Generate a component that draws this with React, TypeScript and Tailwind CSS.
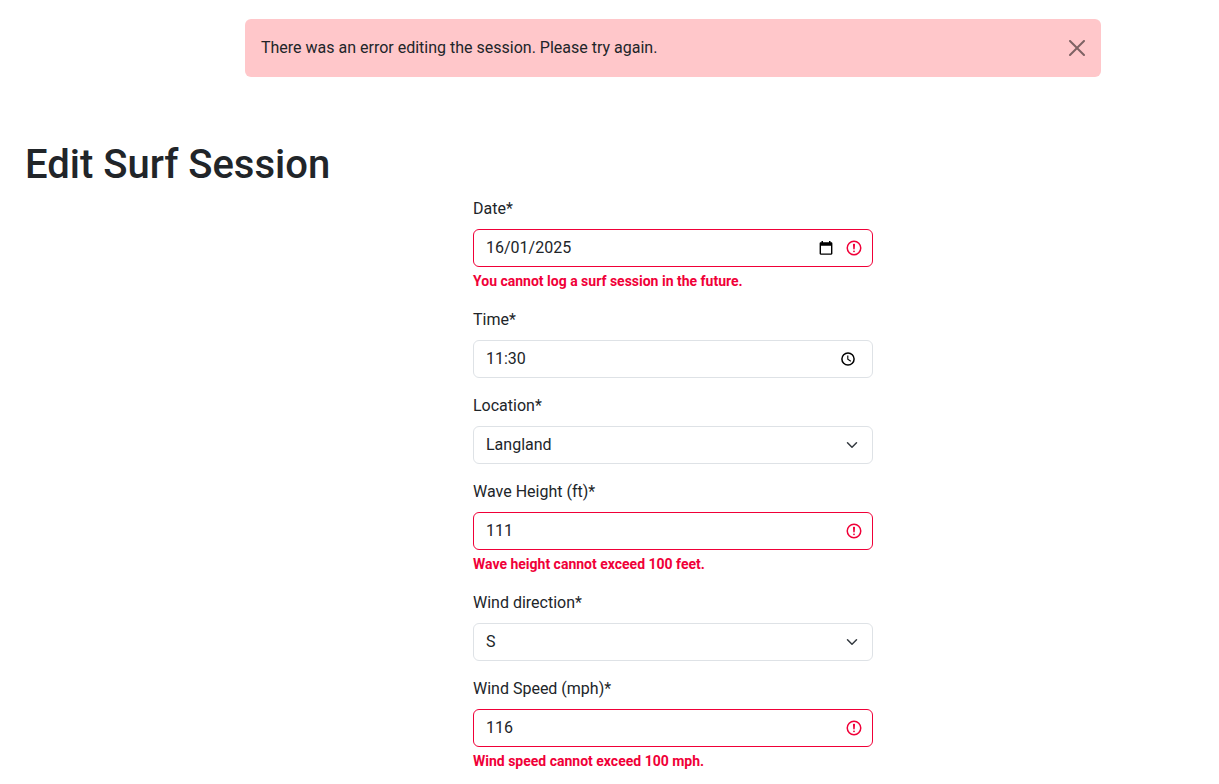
import type { ReactNode } from "react";

const DANGER = "#f00038";

function InvalidIcon() {
  return (
    <svg width="18" height="18" viewBox="0 0 12 12" fill="none" stroke={DANGER} aria-hidden="true">
      <circle cx="6" cy="6" r="4.5" />
      <path strokeLinejoin="round" d="M5.8 3.6h.4L6 6.5z" />
      <circle cx="6" cy="8.2" r=".6" fill={DANGER} stroke="none" />
    </svg>
  );
}

function CalendarIcon() {
  return (
    <svg width="14" height="14" viewBox="0 0 14 14" aria-hidden="true">
      <path
        fill="#000"
        fillRule="evenodd"
        d="M2.5 0H4v1.3h6V0h1.5v1.3h.8c.6 0 1.1.5 1.1 1.1v10.2c0 .6-.5 1.1-1.1 1.1H1.7c-.6 0-1.1-.5-1.1-1.1V2.4c0-.6.5-1.1 1.1-1.1h.8zM2 4.8v7.6h10V4.8z"
      />
    </svg>
  );
}

function ClockIcon() {
  return (
    <svg width="14" height="14" viewBox="0 0 14 14" fill="none" stroke="#000" aria-hidden="true">
      <circle cx="7" cy="7" r="6.1" strokeWidth="1.5" />
      <path d="M6.8 3.4v3.9l3 2" strokeWidth="1.1" />
    </svg>
  );
}

function Chevron() {
  return (
    <svg width="16" height="12" viewBox="0 0 16 16" fill="none" aria-hidden="true">
      <path stroke="#343a40" strokeLinecap="round" strokeLinejoin="round" strokeWidth="2" d="m2 5 6 6 6-6" />
    </svg>
  );
}

type FieldProps = {
  id: string;
  label: string;
  error?: string;
  children: ReactNode;
};

function Field({ id, label, error, children }: FieldProps) {
  return (
    <div className="mb-4">
      <label htmlFor={id} className="mb-2 block w-fit">
        {label}
      </label>
      {children}
      {error && (
        <p id={`${id}-error`} className="mt-1 text-sm leading-[21px] font-bold text-[#f00038]">
          {error}
        </p>
      )}
    </div>
  );
}

type TextFieldProps = {
  id: string;
  label: string;
  value: string;
  error?: string;
  picker?: ReactNode;
  pickerLabel?: string;
};

function TextField({ id, label, value, error, picker, pickerLabel }: TextFieldProps) {
  return (
    <Field id={id} label={label} error={error}>
      <div
        className={
          error
            ? "flex items-center gap-3 rounded-md border border-[#f00038] bg-white pr-[9px]"
            : "flex items-center gap-3 rounded-md border border-[#dee2e6] bg-white pr-[17px]"
        }
      >
        <input
          id={id}
          type="text"
          defaultValue={value}
          aria-invalid={Boolean(error)}
          aria-describedby={error ? `${id}-error` : undefined}
          className="min-w-0 flex-1 bg-transparent py-1.5 pl-3 outline-none"
        />
        {picker && (
          <button type="button" aria-label={pickerLabel}>
            {picker}
          </button>
        )}
        {error && <InvalidIcon />}
      </div>
    </Field>
  );
}

type SelectFieldProps = {
  id: string;
  label: string;
  value: string;
  options: string[];
};

function SelectField({ id, label, value, options }: SelectFieldProps) {
  return (
    <Field id={id} label={label}>
      <div className="grid items-center">
        <select
          id={id}
          defaultValue={value}
          className="col-start-1 row-start-1 h-[38px] w-full appearance-none rounded-md border border-[#dee2e6] bg-white pr-9 pl-3 outline-none"
        >
          {options.map((option) => (
            <option key={option}>{option}</option>
          ))}
        </select>
        <span className="pointer-events-none col-start-1 row-start-1 mr-[13px] justify-self-end">
          <Chevron />
        </span>
      </div>
    </Field>
  );
}

export default function App() {
  return (
    <div className="min-h-screen overflow-x-hidden bg-white pt-[19px] font-[Roboto,sans-serif] text-base leading-6 text-[#212529]">
      <div className="flex justify-center pl-[127px]">
        <div
          role="alert"
          className="flex w-full max-w-[856px] items-center justify-between rounded-md bg-[#ffc7ca] px-4 py-[17px]"
        >
          <p>There was an error editing the session. Please try again.</p>
          <button type="button" aria-label="Close" className="opacity-50">
            <svg width="16" height="16" viewBox="0 0 16 16" fill="#000" aria-hidden="true">
              <path d="M.293.293a1 1 0 0 1 1.414 0L8 6.586 14.293.293a1 1 0 1 1 1.414 1.414L9.414 8l6.293 6.293a1 1 0 0 1-1.414 1.414L8 9.414l-6.293 6.293a1 1 0 0 1-1.414-1.414L6.586 8 .293 1.707a1 1 0 0 1 0-1.414z" />
            </svg>
          </button>
        </div>
      </div>

      <main className="mt-16">
        <h1 className="mb-2 px-[25px] text-[40px] leading-[48px] font-medium">Edit Surf Session</h1>
        <form className="flex justify-center pl-[127px]">
          <div className="w-full max-w-[400px]">
            <TextField
              id="date"
              label="Date*"
              value="16/01/2025"
              error="You cannot log a surf session in the future."
              picker={<CalendarIcon />}
              pickerLabel="Choose date"
            />
            <TextField id="time" label="Time*" value="11:30" picker={<ClockIcon />} pickerLabel="Choose time" />
            <SelectField id="location" label="Location*" value="Langland" options={["Langland"]} />
            <TextField
              id="wave-height"
              label="Wave Height (ft)*"
              value="111"
              error="Wave height cannot exceed 100 feet."
            />
            <SelectField
              id="wind-direction"
              label="Wind direction*"
              value="S"
              options={["N", "NE", "E", "SE", "S", "SW", "W", "NW"]}
            />
            <TextField
              id="wind-speed"
              label="Wind Speed (mph)*"
              value="116"
              error="Wind speed cannot exceed 100 mph."
            />
          </div>
        </form>
      </main>
    </div>
  );
}
